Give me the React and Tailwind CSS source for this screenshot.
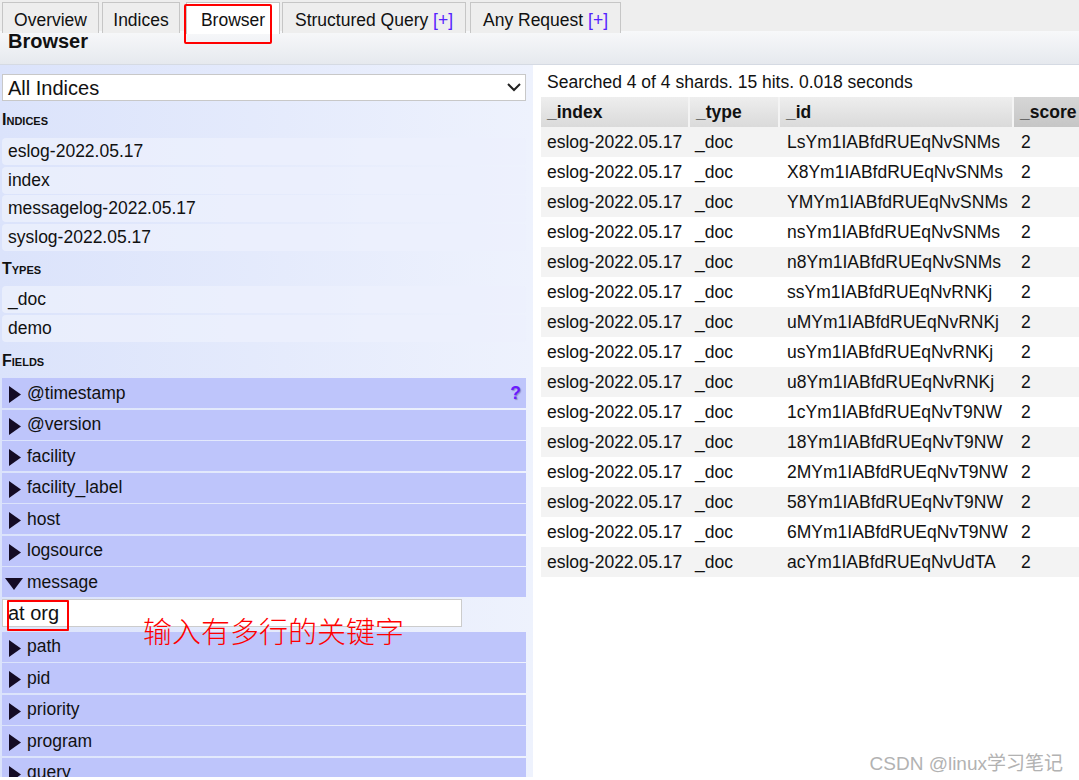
import React from "react";

const indices = ["eslog-2022.05.17", "index", "messagelog-2022.05.17", "syslog-2022.05.17"];
const types = ["_doc", "demo"];
const fieldsTop = ["@timestamp", "@version", "facility", "facility_label", "host", "logsource"];
const fieldsBottom = ["path", "pid", "priority", "program", "query"];
const ids = [
  "LsYm1IABfdRUEqNvSNMs",
  "X8Ym1IABfdRUEqNvSNMs",
  "YMYm1IABfdRUEqNvSNMs",
  "nsYm1IABfdRUEqNvSNMs",
  "n8Ym1IABfdRUEqNvSNMs",
  "ssYm1IABfdRUEqNvRNKj",
  "uMYm1IABfdRUEqNvRNKj",
  "usYm1IABfdRUEqNvRNKj",
  "u8Ym1IABfdRUEqNvRNKj",
  "1cYm1IABfdRUEqNvT9NW",
  "18Ym1IABfdRUEqNvT9NW",
  "2MYm1IABfdRUEqNvT9NW",
  "58Ym1IABfdRUEqNvT9NW",
  "6MYm1IABfdRUEqNvT9NW",
  "acYm1IABfdRUEqNvUdTA",
];

function Tab({ label, plus, active, className }) {
  return (
    <div
      className={
        "text-center border border-b-0 border-[#c6c6c6] pt-[4px] leading-[26px] text-[17.5px] whitespace-nowrap " +
        (active ? "bg-white -mb-px h-[32px] " : "bg-[#eeeeee] h-[31px] ") +
        className
      }
    >
      {label}
      {plus && <span className="text-[#5522ff]"> [+]</span>}
    </div>
  );
}

function Arrow() {
  return (
    <svg width="12" height="17" viewBox="0 0 12 17" className="ml-[7px] mr-[6px] mt-[3px] shrink-0">
      <path d="M0 0 L12 8.5 L0 17 Z" fill="#140b24" />
    </svg>
  );
}

function ArrowDown() {
  return (
    <svg width="18" height="12" viewBox="0 0 18 12" className="ml-[3px] mr-[4px] mt-[4px] shrink-0">
      <path d="M0 0 L18 0 L9 12 Z" fill="#140b24" />
    </svg>
  );
}

function FieldRow({ name, open, help }) {
  return (
    <div className="flex items-center h-[30px] mb-[1.5px] bg-[#bec5fb]">
      {open ? <ArrowDown /> : <Arrow />}
      <span>{name}</span>
      {help && (
        <span className="ml-auto mr-[5px] font-bold text-[#6a1bff] [text-shadow:1px_1px_1px_#8c8cc8]">?</span>
      )}
    </div>
  );
}

function Heading({ children, className }) {
  return (
    <div className={"pl-0 leading-[20px] text-[16px] font-bold [font-variant:small-caps] " + className}>
      {children}
    </div>
  );
}

export default function App() {
  return (
    <div className="relative w-[1079px] h-[780px] overflow-hidden bg-white text-[17.5px] text-[#111] font-['Liberation_Sans',Arial,sans-serif]">
      {/* tabs */}
      <div className="flex items-end h-[34px] pl-[2px] bg-[#eeeeee] border-b border-[#bcbcbc]">
        <Tab label="Overview" className="w-[97px]" />
        <Tab label="Indices" className="w-[78px] ml-[3px]" />
        <Tab label="Browser" active className="w-[94px] ml-[6px]" />
        <Tab label="Structured Query" plus className="w-[184px] ml-[2px]" />
        <Tab label="Any Request" plus className="w-[151px] ml-[4px]" />
      </div>

      {/* header */}
      <div className="h-[34px] border-b border-[#d5dae3] bg-linear-to-b from-[#f7f8fa] to-[#e6e9ee]">
        <div className="pl-[8px] -mt-[3px] text-[20px] font-bold leading-none">Browser</div>
      </div>

      <div className="flex h-[712px]">
        {/* sidebar */}
        <div className="w-[533px] shrink-0 pl-[2px] pr-[7px] pt-[9px] overflow-hidden bg-linear-to-r from-[#dbe3fb] to-[#eef2fd]">
          <div className="flex items-center justify-between h-[27px] bg-white border border-[#c8c8c8] pl-[5px] pr-[4px] text-[20px]">
            <span>All Indices</span>
            <svg width="14" height="9" viewBox="0 0 14 9">
              <path d="M1 1 L7 7 L13 1" fill="none" stroke="#222" strokeWidth="2" />
            </svg>
          </div>

          <Heading className="pt-[9px] pb-[8px]">Indices</Heading>
          {indices.map((n) => (
            <div key={n} className="flex items-center h-[27px] mb-[1.5px] rounded-[4px] bg-[#ecf0fd]/80 pl-[6px]">
              {n}
            </div>
          ))}

          <Heading className="pt-[7px] pb-[7px]">Types</Heading>
          {types.map((n) => (
            <div key={n} className="flex items-center h-[27px] mb-[1.5px] rounded-[4px] bg-[#ecf0fd]/80 pl-[6px]">
              {n}
            </div>
          ))}

          <Heading className="pt-[8px] pb-[7px]">Fields</Heading>
          {fieldsTop.map((n, i) => (
            <FieldRow key={n} name={n} help={i === 0} />
          ))}
          <FieldRow name="message" open />
          <div className="w-[460px] h-[28px] mt-[0.5px] mb-[5px] bg-white border border-[#cccccc] pl-[5px] text-[20px] leading-[26px]">
            at org
          </div>
          {fieldsBottom.map((n) => (
            <FieldRow key={n} name={n} />
          ))}
        </div>

        {/* results */}
        <div className="flex-1 min-w-0 overflow-hidden bg-white pl-[8px] pt-[6px]">
          <div className="pl-[6px] leading-[22px] mb-[4px]">Searched 4 of 4 shards. 15 hits. 0.018 seconds</div>
          <table className="table-fixed border-collapse w-[600px]">
            <colgroup>
              <col className="w-[148px]" />
              <col className="w-[90px]" />
              <col className="w-[234px]" />
              <col className="w-[128px]" />
            </colgroup>
            <thead>
              <tr className="h-[30px]">
                <th className="text-left font-bold pl-[6px] bg-linear-to-b from-[#eeeeee] to-[#dadada]">_index</th>
                <th className="text-left font-bold pl-[6px] bg-linear-to-b from-[#eeeeee] to-[#dadada] border-l-2 border-[#f4f4f4]">_type</th>
                <th className="text-left font-bold pl-[6px] bg-linear-to-b from-[#eeeeee] to-[#dadada] border-l-2 border-[#f4f4f4]">_id</th>
                <th className="text-left font-bold pl-[6px] bg-linear-to-b from-[#d6d6d6] to-[#c6c6c6] border-l-2 border-[#f4f4f4]">_score</th>
              </tr>
            </thead>
            <tbody>
              {ids.map((id, i) => (
                <tr key={id} className={"h-[30px] " + (i % 2 === 0 ? "bg-[#f3f3f3]" : "bg-white")}>
                  <td className="pl-[6px] whitespace-nowrap">eslog-2022.05.17</td>
                  <td className="pl-[6px]">_doc</td>
                  <td className="pl-[8px] whitespace-nowrap">{id}</td>
                  <td className="pl-[8px]">2</td>
                </tr>
              ))}
            </tbody>
          </table>
        </div>
      </div>

      {/* annotations */}
      <div className="absolute left-[184px] top-[4px] w-[88px] h-[40px] border-2 border-[#ff0000] rounded-[2px]" />
      <div className="absolute left-[7px] top-[600px] w-[62px] h-[31px] border-2 border-[#ff0000] rounded-[1px]" />
      <div className="absolute left-[143px] top-[616px] text-[29px] leading-none text-[#ff0000] font-['Noto_Sans_CJK_SC',sans-serif] font-light">
        输入有多行的关键字
      </div>
      <div className="absolute right-[16px] bottom-[7px] text-[19px] leading-none text-[#b2b2b2] font-['Liberation_Sans','Noto_Sans_CJK_SC',sans-serif]">
        CSDN @linux学习笔记
      </div>
    </div>
  );
}
